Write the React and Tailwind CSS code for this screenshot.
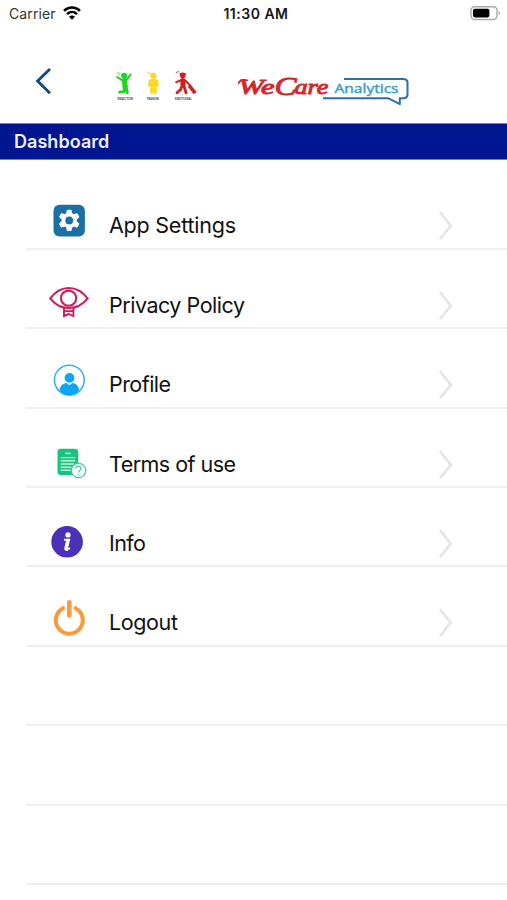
import React from "react";

function GearIcon() {
  return (
    <g>
      <rect x="6.5" y="34.8" width="31.4" height="31.6" rx="6" fill="#1a6fa5" />
      <g transform="translate(22.2 50.4)" fill="#fff">
        {[0, 60, 120, 180, 240, 300].map((a) => (
          <path key={a} d="M-2.8 -6 L-2 -10.2 H2 L2.8 -6 Z" transform={`rotate(${a})`} stroke="#fff" strokeWidth="0.8" strokeLinejoin="round" />
        ))}
        <circle r="7.7" />
        <circle r="3.9" fill="#1a6fa5" />
      </g>
    </g>
  );
}

function EyeIcon() {
  return (
    <g fill="none" stroke="#cf1b5b" strokeWidth="2.1" strokeLinejoin="miter">
      <path d="M3.2 48.4 C8 42.2 14.5 38 21.8 38 S35.8 42.2 40.6 48.4 C35.8 54.6 29.3 58 21.8 58 S8 54.6 3.2 48.4 Z" />
      <circle cx="21.6" cy="48.2" r="7.6" />
      <path d="M17 58 V66 L21.8 64 L26.4 66 V58 M17 60.6 Q21.8 62 26.4 60.6" strokeWidth="1.9" />
    </g>
  );
}

function ProfileIcon() {
  return (
    <g>
      <circle cx="22.3" cy="51.1" r="14.9" fill="none" stroke="#2fb0f6" strokeWidth="1.5" />
      <circle cx="22.5" cy="48.9" r="4.9" fill="#0ba5fa" />
      <path d="M12.7 61.6 C12.9 56.8 15.3 54.6 19.7 54 L22.4 56.2 L25.2 54 C29.6 54.6 31.8 56.8 32 61.6 C29.5 64.7 26.2 66.4 22.3 66.4 S15.3 64.7 12.7 61.6 Z" fill="#0ba5fa" />
    </g>
  );
}

function TermsIcon() {
  return (
    <g>
      <rect x="10.5" y="39.8" width="20.7" height="26.2" rx="3.2" fill="#15c57e" />
      <path d="M18.2 44.4 H23.5" stroke="#d9f8ea" strokeWidth="1.5" />
      <path d="M13.6 48.6 H28.2 M13.6 51.8 H28.2 M13.6 55 H27 M13.6 58.2 H24.5 M13.6 61.3 H23.5" stroke="#c5f3df" strokeWidth="1.4" />
      <circle cx="31.5" cy="61.5" r="7.2" fill="#fff" stroke="#4acb9b" strokeWidth="1.3" />
      <path d="M29 59.6 C29 56.4 34 56.4 34 59.5 C34 61.5 31.5 61.5 31.5 63.5 M31.5 64.9 V66.2" fill="none" stroke="#4acb9b" strokeWidth="1.2" />
    </g>
  );
}

function InfoIcon() {
  return (
    <g>
      <circle cx="20.1" cy="53.8" r="15.8" fill="#4a30b6" />
      <circle cx="21" cy="46.9" r="2.6" fill="#fff" />
      <path d="M17 51.8 H22.1 L20 60 Q19.8 61.7 23 60.2" fill="none" stroke="#fff" strokeWidth="2" />
      <path d="M20.8 51.5 L18.7 60 Q18.3 62 20.8 61.4" fill="none" stroke="#fff" strokeWidth="2.8" />
    </g>
  );
}

function PowerIcon() {
  return (
    <g fill="none" stroke="#fb9a3c" strokeWidth="4" strokeLinecap="round">
      <path d="M16 41.2 A13.5 13.5 0 1 0 28.6 41.2" />
      <path d="M22.3 35.2 V48.4" strokeWidth="4.6" />
    </g>
  );
}

const ITEMS = [
  { label: "App Settings", Icon: GearIcon, width: 127 },
  { label: "Privacy Policy", Icon: EyeIcon, width: 136 },
  { label: "Profile", Icon: ProfileIcon, width: 62 },
  { label: "Terms of use", Icon: TermsIcon, width: 127 },
  { label: "Info", Icon: InfoIcon, width: 37 },
  { label: "Logout", Icon: PowerIcon, width: 69 },
];

function StatusBar() {
  return (
    <div className="grid h-[28px] grid-cols-3 items-center pr-[6px] pl-[9px]">
      <div className="flex items-center gap-[7px]">
        <span className="text-[14px] leading-[28px] tracking-[0.1px] text-[#333]">Carrier</span>
        <svg className="-mt-[2px]" width="18" height="15" viewBox="0 0 18 15" fill="none" stroke="#000" strokeWidth="2.5">
          <path d="M1 4.9 C5.5 0.5 12.5 0.5 17 4.9" />
          <path d="M4 8.1 C7 5.3 11 5.3 14 8.1" />
          <path d="M9 13.8 L6 10.7 C7.7 9.2 10.3 9.2 12 10.7 Z" fill="#000" stroke="none" />
        </svg>
      </div>
      <div className="-mr-[2px] text-center text-[14px] leading-[28px] font-semibold tracking-[0.5px] whitespace-nowrap text-[#161616]">11:30 AM</div>
      <svg className="-mt-[2px] justify-self-end" width="31" height="16" viewBox="0 0 31 16">
        <rect x="1" y="1.7" width="26" height="12.8" rx="3.8" fill="#fff" stroke="#aaa" strokeWidth="1.4" />
        <rect x="3" y="3.8" width="16.4" height="8.6" rx="1.8" fill="#000" />
        <path d="M28.6 5.8 Q31.5 8 28.6 10.3 Z" fill="#aaa" />
      </svg>
    </div>
  );
}

function Figures() {
  return (
    <svg width="90" height="40" viewBox="0 0 90 40" fill="none" strokeLinecap="round" strokeLinejoin="round">
      <g stroke="#24d321">
        <circle cx="14.2" cy="10.8" r="3.1" fill="#24d321" stroke="none" />
        <path d="M7 12 L12 15.2 L16.6 14.6 L20.6 9.6" strokeWidth="2" />
        <path d="M14.4 15.8 L15 20.6" strokeWidth="5.2" />
        <path d="M14 21.5 L14.2 26.6 L9.6 27.2 M16.2 21.5 L17.4 27.8" strokeWidth="2.8" />
        <path d="M7 8.4 L9 7.6 M8.5 9.8 L10.2 9" strokeWidth="0.7" />
      </g>
      <g stroke="#f9d72b">
        <circle cx="43.4" cy="10.8" r="3.1" fill="#f9d72b" stroke="none" />
        <path d="M40.4 16.2 Q43.4 15 46.6 16.2 L47 20 H39.8 Z" fill="#f9d72b" strokeWidth="3.6" />
        <path d="M41.8 21 V27.4 M45.2 21 V27.4" strokeWidth="3.2" />
        <path d="M37.4 8.2 L40.4 6.8 M38.8 9.6 L40.4 8.8" strokeWidth="0.8" />
      </g>
      <g stroke="#d11e1e">
        <circle cx="72.7" cy="10.4" r="2.8" fill="#d11e1e" stroke="none" />
        <path d="M70 8.8 H75.8" strokeWidth="1.3" />
        <path d="M72.8 15.4 L73 20" strokeWidth="5" />
        <path d="M71.5 15 L66.2 17.2 M75 15.2 L79.4 19.6" strokeWidth="2" />
        <path d="M72 21 L70.6 24.4 L67 27.8 M74 21 L76 27.8" strokeWidth="2.8" />
        <path d="M80.2 21.8 L84 26.6" strokeWidth="3.6" strokeLinecap="square" />
        <path d="M66.2 7.7 L68.8 6.4" strokeWidth="0.8" />
      </g>
      <g fill="#444" fontFamily="Liberation Sans, sans-serif" fontWeight="700" fontSize="3.2">
        <text x="7.5" y="35.4" textLength="15.5" lengthAdjust="spacingAndGlyphs">REACTIVE</text>
        <text x="37" y="35.4" textLength="12" lengthAdjust="spacingAndGlyphs">PASSIVE</text>
        <text x="65" y="35.4" textLength="17" lengthAdjust="spacingAndGlyphs">EMOTIONAL</text>
      </g>
    </svg>
  );
}

function Logo() {
  return (
    <svg width="180" height="45" viewBox="0 0 180 45">
      <path d="M109 14 H168 Q172.5 14 172.5 17.5 V29.8 Q172.5 32.8 169 33.2 H164.8 V39.2 L153 33.2 H88" fill="none" stroke="#2d6db8" strokeWidth="2" strokeLinejoin="round" />
      <g fill="#d4282c" stroke="#d4282c" strokeWidth="0.9" fontFamily="Liberation Serif, serif" fontStyle="italic">
        <path d="M3.6 18.2 Q5.5 14 10 15" fill="none" strokeWidth="1.8" strokeLinecap="round" />
        <text x="3.5" y="28.5" textLength="36" lengthAdjust="spacingAndGlyphs" fontSize="20">We</text>
        <text x="39.5" y="30" textLength="22" lengthAdjust="spacingAndGlyphs" fontSize="25">C</text>
        <text x="59.5" y="28.5" textLength="34" lengthAdjust="spacingAndGlyphs" fontSize="20">are</text>
      </g>
      <text x="99.5" y="28.2" textLength="64" lengthAdjust="spacingAndGlyphs" fill="#349dcd" stroke="#349dcd" strokeWidth="0.4" fontFamily="Open Sans, sans-serif" fontSize="12.5">Analytics</text>
    </svg>
  );
}

function Header() {
  return (
    <header className="flex h-[95px] items-start pt-[37px] pl-[34px]">
      <svg width="20" height="40" viewBox="0 0 20 40" fill="none" stroke="#104b82" strokeWidth="2.9">
        <path d="M15 5 L3.6 16 L15 27.2" strokeLinecap="square" />
      </svg>
      <div className="ml-[56px] flex">
        <Figures />
      </div>
      <div className="ml-[35px] flex">
        <Logo />
      </div>
    </header>
  );
}

function MenuRow({ label, Icon, width }) {
  return (
    <li className="ml-[26px] flex h-[79.4px] border-b-2 border-[#f0f0f0] pl-[21px]">
      <svg className="shrink-0" width="44" height="77" viewBox="0 0 44 77">
        <Icon />
      </svg>
      <svg className="ml-[18px] shrink-0" width="150" height="77" viewBox="0 0 150 77">
        <text x="0" y="63.3" fontSize="21.5" fill="#111" textLength={width}>{label}</text>
      </svg>
      <svg className="ml-[180px] shrink-0" width="16" height="77" viewBox="0 0 16 77" fill="none" stroke="#e6e6e6" strokeWidth="2.8">
        <path d="M1 42.2 L11.8 55.7 L1 69.2" />
      </svg>
    </li>
  );
}

export default function App() {
  return (
    <main className="h-[900px] w-[507px] overflow-hidden bg-white font-['Inter','Liberation_Sans',sans-serif]">
      <StatusBar />
      <Header />
      <h1 className="flex h-[37px] items-center border-y border-[#7280cb] bg-[#001691] pl-[14px] text-[18px] font-semibold tracking-[0.05px] text-[#edf0ff]">
        Dashboard
      </h1>
      <ul className="pt-[10.4px]">
        {ITEMS.map((item) => (
          <MenuRow key={item.label} {...item} />
        ))}
        {[0, 1, 2].map((row) => (
          <li key={row} className="ml-[26px] h-[79.4px] border-b-2 border-[#f0f0f0]" />
        ))}
      </ul>
    </main>
  );
}
